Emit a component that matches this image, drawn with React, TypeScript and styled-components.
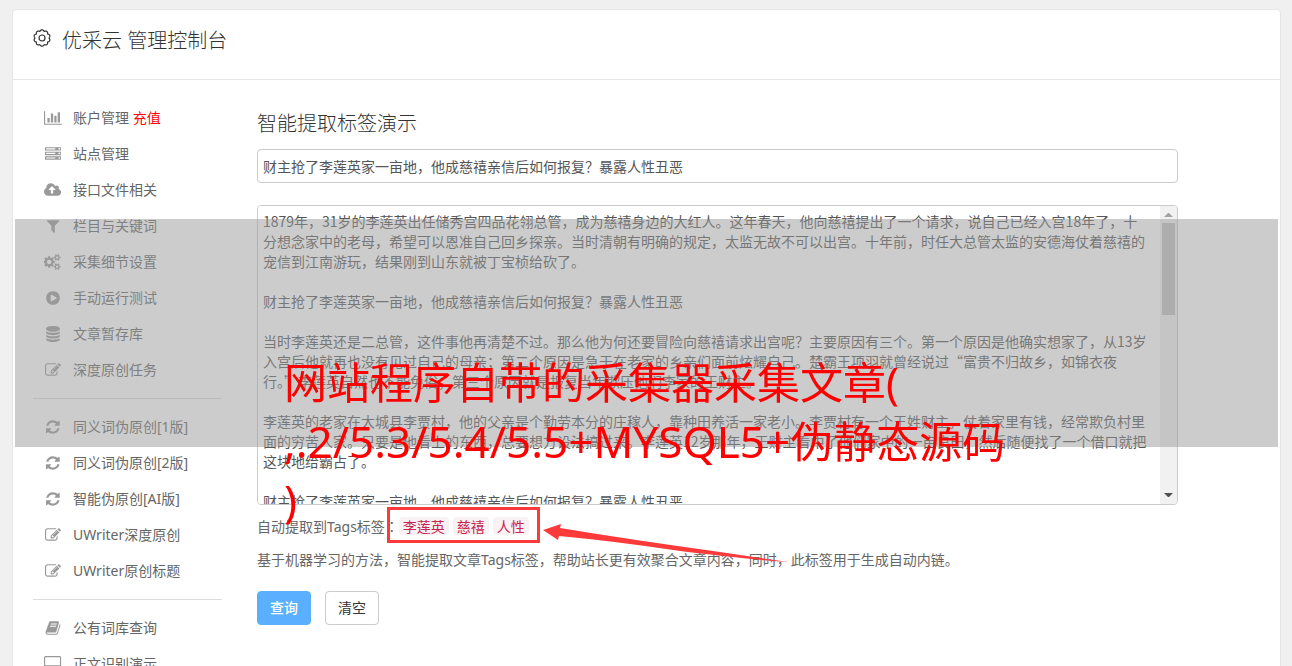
import React from "react";
import styled, { createGlobalStyle } from "styled-components";

const latinFirst = `"Noto Sans", "Noto Sans CJK SC", sans-serif`;
const hanFirst = `"Noto Sans CJK SC", "Noto Sans", sans-serif`;

const GlobalStyle = createGlobalStyle`
  *, *::before, *::after { box-sizing: border-box; }
  html { height: 100%; overflow: hidden; }
  body {
    height: 100%;
    margin: 0;
    overflow: hidden;
    background: #f0f0f0;
    color: #666;
    font: 14px/20px ${latinFirst};
  }
`;

const Page = styled.div`
  position: relative;
  padding: 9px 11px 0 12px;
`;

const Panel = styled.div`
  background: #fff;
  border: 1px solid #e5e5e5;
  border-radius: 4px;
`;

const Header = styled.header`
  display: flex;
  align-items: flex-start;
  gap: 11px;
  height: 70px;
  padding: 19px 20px 0;
  border-bottom: 1px solid #e5e5e5;
  color: #333;
`;

const Title = styled.h1`
  margin: 0;
  font-size: 20px;
  line-height: 24px;
  font-weight: 300;
`;

const Columns = styled.div`
  display: flex;
  gap: 35px;
  padding: 20px 0 0 20px;
`;

const Sidebar = styled.nav`
  flex: 0 0 189px;
`;

const MenuList = styled.ul`
  margin: 0;
  padding: 0;
  list-style: none;

  & + & {
    margin-top: 10px;
    padding-top: 10px;
    border-top: 1px solid #ddd;
  }
`;

const MenuLink = styled.a`
  display: flex;
  align-items: center;
  gap: 10px;
  height: 36px;
  padding-left: 10px;
  color: #666;
  text-decoration: none;
  white-space: nowrap;
`;

const IconSlot = styled.span`
  display: flex;
  justify-content: center;
  width: 20px;
  color: #999;
`;

const Hot = styled.span`
  color: #f00;
`;

const Content = styled.main`
  flex: 1;
  min-width: 0;
  padding-top: 10px;
`;

const Form = styled.form`
  display: flex;
  flex-direction: column;
  width: 90%;
`;

const Heading = styled.h2`
  margin: 0 0 11px;
  color: #333;
  font-size: 20px;
  line-height: 28px;
  font-weight: 300;
`;

const TextInput = styled.input`
  height: 34px;
  margin-bottom: 22px;
  padding: 5px;
  border: 1px solid #ccc;
  border-radius: 4px;
  background: #fff;
  color: #555;
  font: 14px/20px ${hanFirst};
`;

const TextBox = styled.div`
  display: flex;
  height: 300px;
  border: 1px solid #ccc;
  border-radius: 4px;
  overflow: hidden;
`;

const TextArea = styled.textarea`
  flex: 1;
  min-width: 0;
  padding: 5px 11px 5px 5px;
  border: 0;
  background: #fff;
  color: #555;
  font: 14px/20px ${hanFirst};
  resize: none;
  overflow-y: auto;
  scrollbar-width: none;
`;

const ScrollBar = styled.div`
  display: flex;
  flex-direction: column;
  justify-content: space-between;
  width: 17px;
  background: #f1f1f1;
`;

const ScrollArrow = styled.svg<{ $muted?: boolean }>`
  display: block;
  fill: ${(p) => (p.$muted ? "#a3a3a3" : "#505050")};
`;

const ScrollTrack = styled.div`
  flex: 1;
  padding: 0 2px;
`;

const ScrollThumb = styled.div`
  height: 35%;
  background: #c1c1c1;
`;

const TagLine = styled.div`
  display: flex;
  align-items: center;
  height: 20px;
  margin-top: 11px;
  white-space: nowrap;
`;

const Colon = styled.span`
  font-family: "Noto Sans CJK TC", "Noto Sans CJK SC", sans-serif;
`;

const Tags = styled.div`
  position: relative;
  display: flex;
  gap: 4px;
`;

const Tag = styled.code`
  padding: 0 4px;
  border-radius: 4px;
  background: #f9f2f4;
  color: #c7254e;
  font: 14px/18px ${hanFirst};
`;

const Frame = styled.div`
  position: absolute;
  inset: -10px -11px -8px -12px;
  border: 3px solid #fd3a3a;
`;

const Arrow = styled.svg`
  position: absolute;
  left: 100%;
  top: 7px;
  margin-left: 14px;
`;

const Note = styled.p`
  margin: 14px 0 21px;
  white-space: nowrap;
`;

const Actions = styled.div`
  display: flex;
  gap: 14px;
`;

const Button = styled.button<{ $primary?: boolean }>`
  width: 54px;
  height: 34px;
  padding: 0 0 2px;
  border: 1px solid ${(p) => (p.$primary ? "#5aafff" : "#ccc")};
  border-radius: 4px;
  background: ${(p) => (p.$primary ? "#5aafff" : "#fff")};
  color: ${(p) => (p.$primary ? "#fff" : "#333")};
  font: ${(p) => (p.$primary ? 500 : 400)} 14px/20px ${hanFirst};
`;

const Shade = styled.div`
  position: absolute;
  top: 219px;
  left: 15px;
  right: 14px;
  height: 228px;
  background: rgba(153, 153, 153, 0.5);
  pointer-events: none;
`;

const Caption = styled.p`
  position: absolute;
  top: 353px;
  left: 284px;
  margin: 0;
  color: #f00;
  font-size: 43px;
  line-height: 59px;
  white-space: pre;
  pointer-events: none;
`;

const CaptionLatin = styled.span`
  font-size: 44px;
  line-height: 1;
`;

type Glyph = { w: number; d: string };

const glyphs: Record<string, Glyph> = {
  chart: {
    w: 2048,
    d: "M640 896v512h-256v-512h256zm384-512v1024h-256v-1024h256zm1024 1152v128h-2048v-1536h128v1408h1920zm-640-896v768h-256v-768h256zm384-384v1152h-256v-1152h256z",
  },
  server: {
    w: 1792,
    d: "M128 1408h1024v-128h-1024v128zm0-512h1024v-128h-1024v128zm1568 448q0-40-28-68t-68-28-68 28-28 68 28 68 68 28 68-28 28-68zm-1568-960h1024v-128h-1024v128zm1568 448q0-40-28-68t-68-28-68 28-28 68 28 68 68 28 68-28 28-68zm0-512q0-40-28-68t-68-28-68 28-28 68 28 68 68 28 68-28 28-68zm96 832v384h-1792v-384h1792zm0-512v384h-1792v-384h1792zm0-512v384h-1792v-384h1792z",
  },
  cloud: {
    w: 1920,
    d: "M1280 864q0-14-9-23l-352-352q-9-9-23-9t-23 9l-351 351q-10 12-10 24 0 14 9 23t23 9h224v352q0 13 9.5 22.5t22.5 9.5h192q13 0 22.500-9.500t9.500-22.500v-352h224q13 0 22.500-9.500t9.500-22.500zm640 288q0 159-112.500 271.500t-271.500 112.500h-1088q-185 0-316.500-131.500t-131.500-316.500q0-130 70-240t188-165q-2-30-2-43 0-212 150-362t362-150q156 0 285.500 87t188.500 231q71-62 166-62 106 0 181 75t75 181q0 76-41 138 130 31 213.500 135.500t83.500 238.500z",
  },
  filter: {
    w: 1600,
    d: "M1495 295q17 41-14 70l-493 493v742q0 42-39 59-13 5-25 5-27 0-45-19l-256-256q-19-19-19-45v-486l-493-493q-31-29-14-70 17-39 59-39h1280q42 0 59 39z",
  },
  cogs: {
    w: 1920,
    d: "M832 896q0-106-75-181t-181-75-181 75-75 181 75 181 181 75 181-75 75-181zm768 512q0-52-38-90t-90-38-90 38-38 90q0 53 37.5 90.5t90.5 37.5 90.5-37.5 37.5-90.5zm0-1024q0-52-38-90t-90-38-90 38-38 90q0 53 37.5 90.5t90.5 37.5 90.5-37.5 37.5-90.5zm-384 421v185q0 10-7 19.5t-16 10.5l-155 24q-11 35-32 76 34 48 90 115 7 11 7 20 0 12-7 19-23 30-82.5 89.5t-78.5 59.5q-11 0-21-7l-115-90q-37 19-77 31-11 108-23 155-7 24-30 24h-186q-11 0-20-7.5t-10-17.5l-23-153q-34-10-75-31l-118 89q-7 7-20 7-11 0-21-8-144-133-144-160 0-9 7-19 10-14 41-53t47-61q-23-44-35-82l-152-24q-10-1-17-9.5t-7-19.5v-185q0-10 7-19.5t16-10.5l155-24q11-35 32-76-34-48-90-115-7-11-7-20 0-12 7-20 22-30 82-89t79-59q11 0 21 7l115 90q34-18 77-32 11-108 23-154 7-24 30-24h186q11 0 20 7.5t10 17.5l23 153q34 10 75 31l118-89q8-7 20-7 11 0 21 8 144 133 144 160 0 8-7 19-12 16-42 54t-45 60q23 48 34 82l152 23q10 2 17 10.5t7 19.5zm640 533v140q0 16-149 31-12 27-30 52 51 113 51 138 0 4-4 7-122 71-124 71-8 0-46-47t-52-68q-20 2-30 2t-30-2q-14 21-52 68t-46 47q-2 0-124-71-4-3-4-7 0-25 51-138-18-25-30-52-149-15-149-31v-140q0-16 149-31 13-29 30-52-51-113-51-138 0-4 4-7 4-2 35-20t59-34 30-16q8 0 46 46.5t52 67.5q20-2 30-2t30 2q51-71 92-112l6-2q4 0 124 70 4 3 4 7 0 25-51 138 17 23 30 52 149 15 149 31zm0-1024v140q0 16-149 31-12 27-30 52 51 113 51 138 0 4-4 7-122 71-124 71-8 0-46-47t-52-68q-20 2-30 2t-30-2q-14 21-52 68t-46 47q-2 0-124-71-4-3-4-7 0-25 51-138-18-25-30-52-149-15-149-31v-140q0-16 149-31 13-29 30-52-51-113-51-138 0-4 4-7 4-2 35-20t59-34 30-16q8 0 46 46.5t52 67.5q20-2 30-2t30 2q51-71 92-112l6-2q4 0 124 70 4 3 4 7 0 25-51 138 17 23 30 52 149 15 149 31z",
  },
  play: {
    w: 1792,
    d: "M896 128q209 0 385.5 103t279.5 279.5 103 385.5-103 385.5-279.5 279.5-385.5 103-385.5-103-279.5-279.5-103-385.5 103-385.5 279.5-279.5 385.5-103zm384 823q32-18 32-55t-32-55l-544-320q-31-19-64-1-32 19-32 56v640q0 37 32 56 16 8 32 8 17 0 32-9z",
  },
  database: {
    w: 1792,
    d: "M896 768q237 0 443-43t325-127v170q0 69-103 128t-280 93.5-385 34.5-385-34.5-280-93.5-103-128v-170q119 84 325 127t443 43zm0 768q237 0 443-43t325-127v170q0 69-103 128t-280 93.5-385 34.5-385-34.5-280-93.5-103-128v-170q119 84 325 127t443 43zm0-384q237 0 443-43t325-127v170q0 69-103 128t-280 93.5-385 34.5-385-34.5-280-93.5-103-128v-170q119 84 325 127t443 43zm0-1152q208 0 385 34.5t280 93.5 103 128v128q0 69-103 128t-280 93.5-385 34.5-385-34.5-280-93.5-103-128v-128q0-69 103-128t280-93.5 385-34.5z",
  },
  edit: {
    w: 1792,
    d: "M888 1184l116-116-152-152-116 116v56h96v96h56zm440-720q-16-16-33 1l-350 350q-17 17-1 33t33-1l350-350q17-17 1-33zm80 594v190q0 119-84.5 203.5t-203.5 84.5h-832q-119 0-203.5-84.5t-84.5-203.5v-832q0-119 84.5-203.5t203.5-84.5h832q63 0 117 25 15 7 18 23 3 17-9 29l-49 49q-14 14-32 8-23-6-45-6h-832q-66 0-113 47t-47 113v832q0 66 47 113t113 47h832q66 0 113-47t47-113v-126q0-13 9-22l64-64q15-15 35-7t20 29zm-96-738l288 288-672 672h-288v-288zm444 132l-92 92-288-288 92-92q28-28 68-28t68 28l152 152q28 28 28 68t-28 68z",
  },
  refresh: {
    w: 1536,
    d: "M1511 1056q0 5-1 7-64 268-268 434.5t-478 166.5q-146 0-282.5-55t-243.5-157l-129 129q-19 19-45 19t-45-19-19-45v-448q0-26 19-45t45-19h448q26 0 45 19t19 45-19 45l-137 137q71 66 161 102t187 36q134 0 250-65t186-179q11-17 53-117 8-23 30-23h192q13 0 22.5 9.5t9.5 22.5zm25-800v448q0 26-19 45t-45 19h-448q-26 0-45-19t-19-45 19-45l138-138q-148-137-349-137-134 0-250 65t-186 179q-11 17-53 117-8 23-30 23h-199q-13 0-22.5-9.5t-9.5-22.5v-7q65-268 270-434.5t480-166.5q146 0 284 55.5t245 156.5l130-129q19-19 45-19t45 19 19 45z",
  },
  book: {
    w: 1792,
    d: "M1703 478q40 57 18 129l-275 906q-19 64-76.5 107.5t-122.5 43.5h-923q-77 0-148.5-53.5t-99.5-131.5q-24-67-2-127 0-4 3-27t4-37q1-8-3-21.5t-3-19.5q2-11 8-21t16.5-23.5 16.5-23.5q23-38 45-91.5t30-91.5q3-10 .5-30t-.5-28q3-11 17-28t17-23q21-36 42-92t25-90q1-9-2.5-32t.5-28q4-13 22-30.5t22-22.5q19-26 42.5-84.5t27.5-96.5q1-8-3-25.5t-2-26.5q2-8 9-18t18-23 17-21q8-12 16.5-30.5t15-35 16-36 19.5-32 26.5-23.5 36-11.5 47.5 5.5l-1 3q38-9 51-9h761q74 0 114 56t18 130l-274 906q-36 119-71.5 153.5t-128.5 34.5h-869q-27 0-38 15-11 16-1 43 24 70 144 70h923q29 0 56-15.5t35-41.5l300-987q7-22 5-57 38 15 59 43zm-1064 2q-4 13 2 22.5t20 9.5h608q13 0 25.5-9.5t16.5-22.5l21-64q4-13-2-22.5t-20-9.5h-608q-13 0-25.5 9.5t-16.5 22.5zm-83 256q-4 13 2 22.5t20 9.5h608q13 0 25.5-9.5t16.5-22.5l21-64q4-13-2-22.5t-20-9.5h-608q-13 0-25.5 9.5t-16.5 22.5z",
  },
  desktop: {
    w: 1920,
    d: "M1792 992v-832q0-13-9.5-22.5t-22.5-9.5h-1600q-13 0-22.500 9.500t-9.500 22.500v832q0 13 9.500 22.500t22.500 9.500h1600q13 0 22.500-9.500t9.500-22.500zm128-832v1088q0 66-47 113t-113 47h-544q0 37 16 77.500t32 71 16 43.500q0 26-19 45t-45 19h-512q-26 0-45-19t-19-45q0-14 16-44t32-70 16-78h-544q-66 0-113-47t-47-113v-1088q0-66 47-113t113-47h1600q66 0 113 47t47 113z",
  },
};

function Icon({ name }: { name: string }) {
  const g = glyphs[name];
  return (
    <IconSlot>
      <svg width={(g.w * 16) / 1792} height={16} viewBox={`0 0 ${g.w} 1792`} fill="currentColor" aria-hidden="true">
        <path d={g.d} />
      </svg>
    </IconSlot>
  );
}

function GearIcon() {
  const lobes = 10;
  const steps = 200;
  const points: string[] = [];
  for (let i = 0; i <= steps; i++) {
    const a = (i / steps) * Math.PI * 2;
    const r = 6.9 + 1.3 * Math.abs(Math.cos((lobes / 2) * a));
    points.push(`${(9 + r * Math.sin(a)).toFixed(2)} ${(9 - r * Math.cos(a)).toFixed(2)}`);
  }
  return (
    <svg width="18" height="18" viewBox="0 0 18 18" fill="none" stroke="currentColor" strokeWidth="1.2" aria-hidden="true">
      <path d={`M${points.join("L")}Z`} />
      <circle cx="9" cy="9" r="3" />
    </svg>
  );
}

const menu: { icon: string; label: string; hot?: string }[][] = [
  [
    { icon: "chart", label: "账户管理", hot: "充值" },
    { icon: "server", label: "站点管理" },
    { icon: "cloud", label: "接口文件相关" },
    { icon: "filter", label: "栏目与关键词" },
    { icon: "cogs", label: "采集细节设置" },
    { icon: "play", label: "手动运行测试" },
    { icon: "database", label: "文章暂存库" },
    { icon: "edit", label: "深度原创任务" },
  ],
  [
    { icon: "refresh", label: "同义词伪原创[1版]" },
    { icon: "refresh", label: "同义词伪原创[2版]" },
    { icon: "refresh", label: "智能伪原创[AI版]" },
    { icon: "edit", label: "UWriter深度原创" },
    { icon: "edit", label: "UWriter原创标题" },
  ],
  [
    { icon: "book", label: "公有词库查询" },
    { icon: "desktop", label: "正文识别演示" },
  ],
];

const subject = "财主抢了李莲英家一亩地，他成慈禧亲信后如何报复？暴露人性丑恶";

const article =
  [
    "1879年，31岁的李莲英出任储秀宫四品花翎总管，成为慈禧身边的大红人。这年春天，他向慈禧提出了一个请求，说自己已经入宫18年了，十分想念家中的老母，希望可以恩准自己回乡探亲。当时清朝有明确的规定，太监无故不可以出宫。十年前，时任大总管太监的安德海仗着慈禧的宠信到江南游玩，结果刚到山东就被丁宝桢给砍了。",
    subject,
    "当时李莲英还是二总管，这件事他再清楚不过。那么他为何还要冒险向慈禧请求出宫呢？主要原因有三个。第一个原因是他确实想家了，从13岁入宫后他就再也没有见过自己的母亲；第二个原因是急于在老家的乡亲们面前炫耀自己。楚霸王项羽就曾经说过“富贵不归故乡，如锦衣夜行。”李莲英自然也不能免俗；第三个原因就是报复当年欺压他们李家的王财主。",
    "李莲英的老家在大城县李贾村，他的父亲是个勤劳本分的庄稼人，靠种田养活一家老小。李贾村有一个王姓财主，仗着家里有钱，经常欺负村里面的穷苦人家。只要是他看上的东西，总要想方设法搞过来。李莲英12岁那年，王财主看中了他们家中的一亩良田，然后随便找了一个借口就把这块地给霸占了。",
    subject,
  ].join("\n\n") + "\n".repeat(27);

const tags = ["李莲英", "慈禧", "人性"];

export default function App() {
  return (
    <Page>
      <GlobalStyle />
      <Panel>
        <Header>
          <GearIcon />
          <Title>优采云 管理控制台</Title>
        </Header>
        <Columns>
          <Sidebar>
            {menu.map((group, i) => (
              <MenuList key={i}>
                {group.map((item) => (
                  <li key={item.label}>
                    <MenuLink href="#">
                      <Icon name={item.icon} />
                      <span>
                        {item.label}
                        {item.hot && <Hot> {item.hot}</Hot>}
                      </span>
                    </MenuLink>
                  </li>
                ))}
              </MenuList>
            ))}
          </Sidebar>
          <Content>
            <Form onSubmit={(e) => e.preventDefault()}>
              <Heading>智能提取标签演示</Heading>
              <TextInput type="text" aria-label="标题" defaultValue={subject} />
              <TextBox>
                <TextArea aria-label="正文" defaultValue={article} spellCheck={false} />
                <ScrollBar aria-hidden="true">
                  <ScrollArrow $muted width="17" height="17" viewBox="0 0 17 17">
                    <path d="M4 11L8 7H9L13 11Z" />
                  </ScrollArrow>
                  <ScrollTrack>
                    <ScrollThumb />
                  </ScrollTrack>
                  <ScrollArrow width="17" height="17" viewBox="0 0 17 17">
                    <path d="M4 6L8 10H9L13 6Z" />
                  </ScrollArrow>
                </ScrollBar>
              </TextBox>
              <TagLine>
                <span>
                  自动提取到Tags标签<Colon>：</Colon>
                </span>
                <Tags>
                  {tags.map((t) => (
                    <Tag key={t}>{t}</Tag>
                  ))}
                  <Frame />
                  <Arrow width="246" height="42" viewBox="0 0 246 42" aria-hidden="true">
                    <path d="M0 6L18 0L17 4Q90 16 170 27L245 38Q200 35 130 26Q70 17 16 12L15 16Z" fill="#fd3a3a" />
                  </Arrow>
                </Tags>
              </TagLine>
              <Note>基于机器学习的方法，智能提取文章Tags标签，帮助站长更有效聚合文章内容，同时，此标签用于生成自动内链。</Note>
              <Actions>
                <Button type="submit" $primary>
                  查询
                </Button>
                <Button type="reset">清空</Button>
              </Actions>
            </Form>
          </Content>
        </Columns>
      </Panel>
      <Shade />
      <Caption>
        {"网站程序自带的采集器采集文章(\n"}
        <CaptionLatin>,.2/5.3/5.4/5.5+MYSQL5+</CaptionLatin>
        {"伪静态源码\n)"}
      </Caption>
    </Page>
  );
}
